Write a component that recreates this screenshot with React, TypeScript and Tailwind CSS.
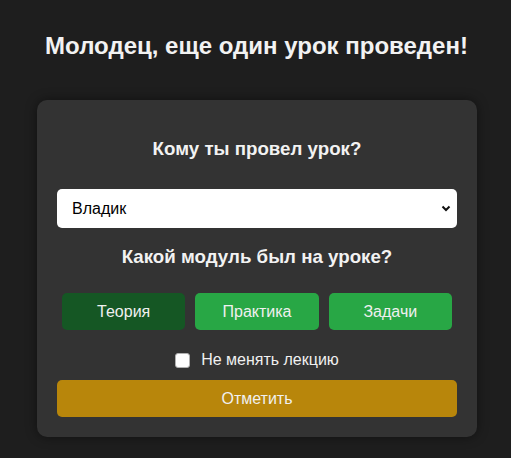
export default function App() {
  const modules = [
    { name: "Теория", active: true },
    { name: "Практика", active: false },
    { name: "Задачи", active: false },
  ];

  return (
    <main
      className="min-h-[458px] bg-[#1e1e1e] pt-[32px] pb-[21px] text-white"
      style={{ fontFamily: '"Liberation Sans", Arial, sans-serif' }}
    >
      <h1 className="text-center text-[24px] font-bold leading-[28px] text-[#f2f2f2] pl-[2px]">
        Молодец, еще один урок проведен!
      </h1>

      <div className="ml-[37px] mt-[40px] w-[440px] rounded-[10px] bg-[#333333] px-[20px] pt-[20px] pb-[20px] shadow-[0_0_12px_rgba(0,0,0,0.45)]">
        <h2 className="mt-[18px] text-center text-[18.72px] font-bold leading-[22px] text-[#f2f2f2]">
          Кому ты провел урок?
        </h2>

        <div className="mt-[29px] flex h-[39px] items-center justify-between rounded-[5px] bg-white pl-[15px] pr-[5px] text-[16px] text-black">
          <span>Владик</span>
          <svg width="10" height="7" viewBox="0 0 10 7" className="mr-[1px]">
            <path d="M1.5 1.5 L5 5 L8.5 1.5" fill="none" stroke="#111" strokeWidth="2" />
          </svg>
        </div>

        <h2 className="mt-[18px] text-center text-[18.72px] font-bold leading-[22px] text-[#f2f2f2]">
          Какой модуль был на уроке?
        </h2>

        <div className="mt-[25px] flex gap-[10px] px-[5px]">
          {modules.map((m) => (
            <button
              key={m.name}
              className={
                m.active
                  ? "flex h-[37px] flex-1 items-center justify-center rounded-[5px] bg-[#155724] text-[16px] text-[#f0f0f0]"
                  : "flex h-[37px] flex-1 items-center justify-center rounded-[5px] bg-[#28a745] text-[16px] text-[#f0f0f0]"
              }
            >
              {m.name}
            </button>
          ))}
        </div>

        <label className="mt-[21px] flex items-center justify-center gap-[11px] text-[16px] leading-[18px] text-[#f0f0f0]">
          <span className="h-[15px] w-[15px] rounded-[3px] border border-[#b0b0b0] bg-white" />
          <span>Не менять лекцию</span>
        </label>

        <button className="mt-[11px] flex h-[37px] w-full items-center justify-center rounded-[5px] bg-[#b8860b] text-[16px] text-[#f0f0f0]">
          Отметить
        </button>
      </div>
    </main>
  );
}
